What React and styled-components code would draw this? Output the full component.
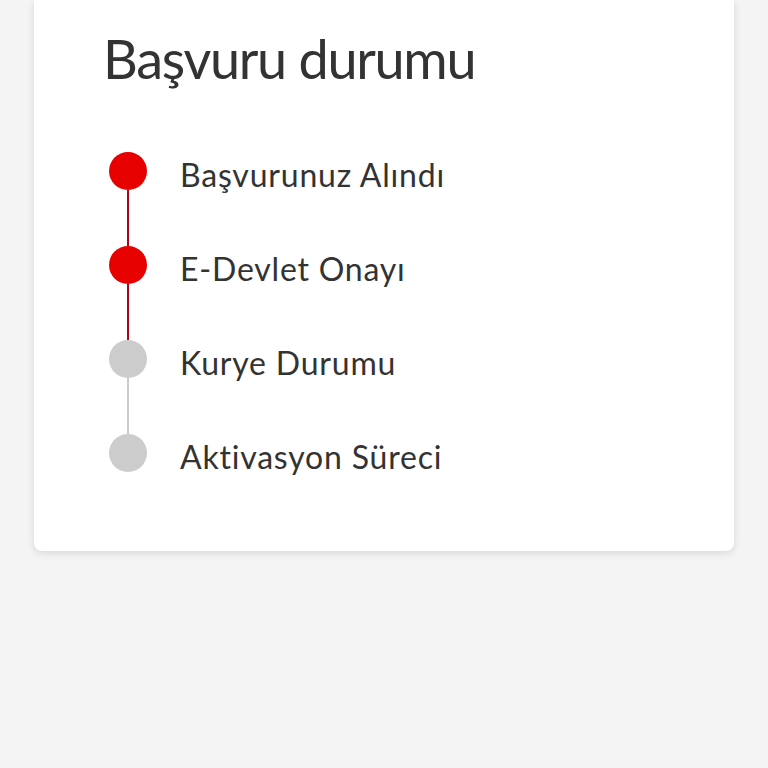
import React from 'react';
import styled, { createGlobalStyle } from 'styled-components';

const GlobalStyle = createGlobalStyle`
  html, body {
    margin: 0;
    padding: 0;
    background: #f4f4f4;
    font-family: Lato, 'Open Sans', sans-serif;
  }
`;

const Page = styled.div`
  min-height: 768px;
  padding: 0 34px;
`;

const Card = styled.section`
  background: #fff;
  border-radius: 0 0 8px 8px;
  box-shadow: 0 2px 8px rgba(0, 0, 0, 0.12);
  padding: 27px 0 75px 69px;
`;

const Title = styled.h1`
  margin: 0;
  font-size: 54px;
  font-weight: 400;
  line-height: 1.2;
  letter-spacing: -1.3px;
  color: #333;
`;

const Steps = styled.ol`
  list-style: none;
  margin: 60px 0 0 6px;
  padding: 0;
`;

const Step = styled.li`
  display: grid;
  grid-template-columns: 38px 1fr;
  column-gap: 33px;
`;

const Marker = styled.div`
  display: flex;
  flex-direction: column;
  align-items: center;
`;

const Dot = styled.span`
  width: 38px;
  height: 38px;
  border-radius: 50%;
  background: ${(props) => (props.done ? '#e60000' : '#cccccc')};
`;

const Connector = styled.span`
  width: 2px;
  height: 56px;
  background: ${(props) => (props.done ? '#b3001b' : '#cccccc')};
`;

const Label = styled.span`
  margin-top: 4px;
  font-size: 32px;
  line-height: 38px;
  letter-spacing: 0.8px;
  color: #333;
`;

const steps = [
  { label: 'Başvurunuz Alındı', done: true },
  { label: 'E-Devlet Onayı', done: true },
  { label: 'Kurye Durumu', done: false },
  { label: 'Aktivasyon Süreci', done: false },
];

const App = () => {
  return (
    <Page>
      <GlobalStyle />
      <Card>
        <Title>Başvuru durumu</Title>
        <Steps>
          {steps.map((step, i) => (
            <Step key={step.label}>
              <Marker>
                <Dot done={step.done} />
                {i < steps.length - 1 && <Connector done={step.done} />}
              </Marker>
              <Label>{step.label}</Label>
            </Step>
          ))}
        </Steps>
      </Card>
    </Page>
  );
};

export default App;
